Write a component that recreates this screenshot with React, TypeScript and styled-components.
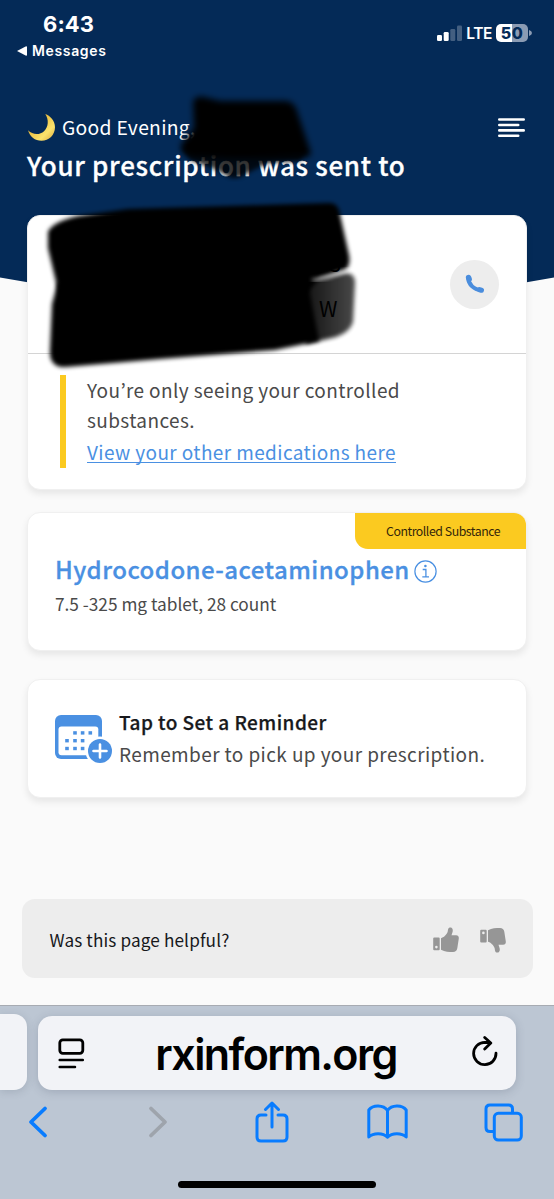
import React from "react";
import styled, { createGlobalStyle } from "styled-components";

const sans = `"Noto Sans CJK KR", "Noto Sans", sans-serif`;
const system = `Inter, "Liberation Sans", sans-serif`;

const GlobalStyle = createGlobalStyle`
  * { box-sizing: border-box; }
  body { margin: 0; background: #fafafa; }
`;

const Page = styled.div`
  position: relative;
  display: flex;
  flex-direction: column;
  width: 554px;
  height: 1199px;
  overflow: hidden;
  background: #fafafa;
  font-family: ${sans};
`;

const Hero = styled.header`
  height: 330px;
  flex: none;
  background: #042a57;
  color: #fff;
  clip-path: polygon(0 0, 100% 0, 100% 277.5px, 50% 325px, 0 277.5px);
`;

const StatusBar = styled.div`
  display: flex;
  justify-content: space-between;
  height: 112px;
  padding: 9px 22px 0 17px;
  font-family: ${system};
`;

const StatusLeft = styled.div`
  display: flex;
  flex-direction: column;
`;

const Time = styled.span`
  padding-left: 26px;
  font-size: 22px;
  font-weight: 700;
  line-height: 30px;
  letter-spacing: 0.1px;
`;

const BackLink = styled.span`
  display: flex;
  align-items: center;
  gap: 5px;
  margin-top: 2px;
  font-size: 14px;
  font-weight: 600;
  line-height: 20px;
  letter-spacing: 0.65px;
`;

const StatusRight = styled.div`
  display: flex;
  align-items: center;
  height: 16px;
  margin-top: 16px;
`;

const Network = styled.span`
  margin: 0 4px 0 4px;
  font-size: 15.5px;
  font-weight: 600;
  letter-spacing: -0.4px;
`;

const Battery = styled.span`
  display: flex;
  align-items: center;
  justify-content: center;
  width: 32px;
  height: 18px;
  border-radius: 5px;
  background: linear-gradient(90deg, #fff 50%, #8b9bb3 50%);
  color: #042a57;
  font-size: 16px;
  font-weight: 800;
  letter-spacing: 0.6px;
`;

const BatteryTip = styled.svg`
  margin-left: 1px;
`;

const Greeting = styled.div`
  display: flex;
  align-items: center;
  height: 30px;
  padding: 0 29px 0 27px;
  font-size: 19.3px;
  line-height: 30px;
  letter-spacing: 0.3px;
`;

const GreetingText = styled.span`
  flex: 1;
  padding-left: 7px;
`;

const MenuIcon = styled.svg`
  margin-top: 2px;
`;

const Heading = styled.h1`
  margin: 5px 0 0 27px;
  font-size: 26px;
  font-weight: 500;
  line-height: 36px;
  letter-spacing: 0.68px;
  white-space: nowrap;
  -webkit-text-stroke: 0.3px currentColor;
`;

const Main = styled.main`
  position: relative;
  flex: 1;
  margin-top: -115.5px;
  padding: 0 27px;
`;

const Card = styled.section<{ $height: number; $gap?: number }>`
  height: ${(p) => p.$height}px;
  margin-top: ${(p) => p.$gap ?? 0}px;
  border: 1px solid #f0f0f0;
  border-radius: 13px;
  background: #fff;
  overflow: hidden;
  box-shadow: 0 4px 7px rgba(0, 0, 0, 0.08);
`;

const Pharmacy = styled.div`
  display: flex;
  align-items: center;
  justify-content: flex-end;
  height: 138.5px;
  padding-right: 27px;
  border-bottom: 1px solid #d4d4d4;
`;

const CallButton = styled.button`
  display: flex;
  align-items: center;
  justify-content: center;
  width: 49px;
  height: 49px;
  padding: 0;
  border: 0;
  border-radius: 50%;
  background: #ededed;
`;

const Note = styled.div`
  height: 93px;
  margin: 21px 0 0 32px;
  padding-left: 21px;
  border-left: 6px solid #fbca20;
  color: #4a4a4a;
  font-size: 19px;
  line-height: 29.5px;
  letter-spacing: 0.4px;
`;

const NoteText = styled.p`
  width: 340px;
  margin: 0;
`;

const NoteLink = styled.a`
  display: block;
  margin-top: 3px;
  color: #4a90e2;
  text-decoration: underline;
  text-decoration-thickness: 1px;
  text-underline-offset: 2px;
  text-decoration-skip-ink: none;
`;

const Badge = styled.div`
  width: 171px;
  height: 35.5px;
  margin-left: auto;
  padding-left: 31px;
  border-bottom-left-radius: 13px;
  background: #fbca20;
  color: #33260a;
  font-size: 12.3px;
  line-height: 36px;
  letter-spacing: -0.45px;
  white-space: nowrap;
`;

const DrugRow = styled.div`
  display: flex;
  align-items: center;
  gap: 4px;
  height: 36px;
  margin: 2px 0 0 27px;
`;

const DrugName = styled.h2`
  margin: 0;
  color: #4a90e2;
  font-size: 24px;
  font-weight: 500;
  line-height: 36px;
  letter-spacing: 0.45px;
  white-space: nowrap;
  -webkit-text-stroke: 0.3px currentColor;
`;

const InfoIcon = styled.svg`
  margin-top: 5px;
`;

const Dosage = styled.p`
  margin: 3px 0 0 27px;
  color: #4a4a4a;
  font-size: 17.25px;
  line-height: 28px;
  white-space: nowrap;
`;

const Reminder = styled.div`
  display: flex;
  padding: 26px 0 0 27px;
`;

const CalendarIcon = styled.svg`
  margin-top: 8.5px;
`;

const ReminderCopy = styled.div`
  margin-left: 7px;
  font-size: 19px;
  line-height: 32px;
  white-space: nowrap;
`;

const ReminderTitle = styled.div`
  color: #17181b;
  font-weight: 500;
  letter-spacing: 0.45px;
  -webkit-text-stroke: 0.25px currentColor;
`;

const ReminderText = styled.div`
  color: #4a4a4a;
  letter-spacing: 0.4px;
`;

const Feedback = styled.div`
  display: flex;
  align-items: center;
  height: 79px;
  margin: 101px -5.5px 0;
  padding: 1px 26.5px 0 28px;
  border-radius: 13px;
  background: #ededed;
  color: #17181b;
  font-size: 17.2px;
  letter-spacing: 0.12px;
`;

const FeedbackLabel = styled.span`
  flex: 1;
`;

const ThumbIcon = styled.svg<{ $down?: boolean }>`
  margin: ${(p) => (p.$down ? "1px 0 0 21px" : "2px 0 0")};
  transform: ${(p) => (p.$down ? "scaleY(-1)" : "none")};
`;

const Browser = styled.footer`
  display: flex;
  flex-direction: column;
  height: 194px;
  flex: none;
  border-top: 1px solid #a7abb2;
  background: #bcc6d3;
`;

const AddressRow = styled.div`
  display: flex;
  gap: 11px;
  padding-top: 9px;
  height: 85px;
`;

const PreviousTab = styled.div`
  width: 27px;
  height: 76px;
  margin-top: -1px;
  border-radius: 0 13px 13px 0;
  background: #f2f3f7;
  box-shadow: 0 2px 8px rgba(60, 70, 90, 0.18);
`;

const AddressBar = styled.div`
  display: flex;
  align-items: center;
  justify-content: space-between;
  width: 478px;
  height: 74px;
  margin-top: 1px;
  padding: 0 18px 0 20px;
  border-radius: 14px;
  background: #f2f3f7;
  box-shadow: 0 2px 10px rgba(60, 70, 90, 0.22);
`;

const Address = styled.span`
  margin: 1px 5px 0 0;
  color: #000;
  font-family: ${system};
  font-size: 43px;
  font-weight: 600;
  letter-spacing: -1.6px;
  line-height: 74px;
`;

const ReloadIcon = styled.svg`
  margin-bottom: 4px;
`;

const Toolbar = styled.nav`
  display: flex;
  justify-content: space-between;
  align-items: center;
  height: 62px;
  padding: 0 29px 0 16px;
`;

const ToolButton = styled.span<{ $nudge?: number }>`
  display: flex;
  justify-content: center;
  width: 44px;
  padding-left: ${(p) => p.$nudge ?? 0}px;
`;

const HomeIndicator = styled.div`
  width: 198px;
  height: 7px;
  margin: 28px auto 0;
  border-radius: 4px;
  background: #000;
`;

const Marker = styled.svg`
  position: absolute;
  left: 0;
  top: 0;
  pointer-events: none;
`;

const Moon = () => (
  <svg width="28" height="28" viewBox="0 0 28 28">
    <defs>
      <linearGradient id="moon" x1="0" y1="0" x2="1" y2="1">
        <stop offset="0.3" stopColor="#e9b93a" />
        <stop offset="0.7" stopColor="#fbe36d" />
        <stop offset="1" stopColor="#d9a63c" />
      </linearGradient>
    </defs>
    <path d="M18.3 1 C23 2.8 28 7.4 28 14.2 C28 21.8 22 27.8 14.5 27.8 C8 27.8 3 23.8 1 17.3 C6 22.3 13 22 17 18.2 C21.5 13.9 22 6.8 18.3 1 Z" fill="url(#moon)" />
  </svg>
);

const Signal = () => (
  <svg width="25" height="16" viewBox="0 0 25 16" fill="#fff">
    <rect x="0" y="10" width="5" height="6" rx="1.3" />
    <rect x="6.7" y="7" width="5" height="9" rx="1.3" />
    <rect x="13.3" y="4" width="5" height="12" rx="1.3" opacity=".25" />
    <rect x="20" y="0.5" width="5" height="15.5" rx="1.3" opacity=".25" />
  </svg>
);

const Menu = () => (
  <MenuIcon width="27" height="20" viewBox="0 0 27 20" stroke="#fff" strokeWidth="2.6" strokeLinecap="round">
    <path d="M1.3 1.5H25.7M1.3 7H20.2M1.3 12.4H25.7M1.3 17.8H20.2" />
  </MenuIcon>
);

const Phone = () => (
  <svg width="20" height="20" viewBox="0 0 20 20" fill="none" stroke="#4a8ddd">
    <path d="M3 3.5 C3.5 10.5 9 16 16.5 16.2" strokeWidth="4" />
    <path d="M3.6 3.6 L4.2 5" strokeWidth="5.4" strokeLinecap="round" />
    <path d="M14.6 15.7 L16.4 16.2" strokeWidth="5.2" strokeLinecap="round" />
  </svg>
);

const Info = () => (
  <InfoIcon width="23" height="23" viewBox="0 0 23 23" fill="none" stroke="#4a90e2">
    <circle cx="11.5" cy="11.5" r="10.6" strokeWidth="1.2" />
    <path d="M8.7 9.5H11.9V16.6M8.3 16.8H15" strokeWidth="1.3" />
    <circle cx="11.4" cy="6" r="1.3" fill="#4a90e2" stroke="none" />
  </InfoIcon>
);

const dots = [
  [18.2, 16.2], [25.8, 16.2], [33.5, 16.2],
  [10.2, 24], [18.2, 24], [25.8, 24],
  [10.2, 31.8], [18.2, 31.8], [25.8, 31.8],
];

const Calendar = () => (
  <CalendarIcon width="57" height="50" viewBox="0 0 57 50">
    <rect width="47" height="44" rx="6" fill="#4a90e2" />
    <rect x="3.5" y="11.5" width="39.8" height="28.7" rx="3" fill="#fff" />
    {dots.map(([x, y]) => (
      <rect key={`${x}-${y}`} x={x} y={y} width="3.6" height="3.4" fill="#4a90e2" />
    ))}
    <circle cx="45" cy="36" r="14.5" fill="#fff" />
    <circle cx="45" cy="36" r="12" fill="#4a90e2" />
    <path d="M45 29.5V42.5M38.5 36H51.5" stroke="#fff" strokeWidth="2.6" strokeLinecap="round" />
  </CalendarIcon>
);

const Thumb = ({ down }: { down?: boolean }) => (
  <ThumbIcon $down={down} width="26" height="26" viewBox="0 0 26 26" fill="#969696">
    <path fillRule="evenodd" d="M1.2 10.6H5.7Q6.7 10.6 6.7 11.6V22.3Q6.7 23.3 5.7 23.3H1.2Q0.2 23.3 0.2 22.3V11.6Q0.2 10.6 1.2 10.6ZM3.4 18.8A1.3 1.3 0 1 0 3.4 21.4A1.3 1.3 0 1 0 3.4 18.8Z" />
    <path d="M8 11.2C10.5 10.6 13.9 7.7 14.7 4.5C15 2.7 15 0.4 17.3 0.4C19.7 0.4 20.3 3.1 19.4 5.5L18.5 8.3H23C25.3 8.3 26 9.7 25.8 11.5L24.3 21.3C23.8 23.8 22.4 25 20 25C15.9 25 12 25 8 22.8Z" />
  </ThumbIcon>
);

const PageMenu = () => (
  <svg width="27" height="31" viewBox="0 0 27 31" fill="none" stroke="#000" strokeWidth="2.8" strokeLinecap="round">
    <rect x="1.8" y="1.8" width="23" height="13.5" rx="3" />
    <path d="M1.7 22H24.8M1.7 29H17" strokeWidth="2.5" />
  </svg>
);

const Reload = () => (
  <ReloadIcon width="26" height="31" viewBox="0 0 26 31" fill="none" stroke="#000" strokeWidth="2.8" strokeLinecap="round" strokeLinejoin="round">
    <path d="M24 17.2A11.2 11.2 0 1 1 12.8 6.3L18.3 6.6M12.7 1.5L18.8 7L12.7 13" />
  </ReloadIcon>
);

const blue = "#087cff";

const Chevron = ({ forward }: { forward?: boolean }) => (
  <svg width="20" height="34" viewBox="0 0 20 34" fill="none" stroke={forward ? "#9ea4ac" : blue} strokeWidth="3.8" strokeLinecap="round" strokeLinejoin="round">
    <path d={forward ? "M3 3.5L17 17L3 30.5" : "M17 3.5L3 17L17 30.5"} />
  </svg>
);

const Share = () => (
  <svg width="34" height="42" viewBox="0 0 34 42" fill="none" stroke={blue} strokeWidth="3" strokeLinecap="round" strokeLinejoin="round">
    <path d="M11 14H6Q2 14 2 18V36Q2 40 6 40H28Q32 40 32 36V18Q32 14 28 14H23M17 26V3M10.5 8.5L17 2L23.5 8.5" />
  </svg>
);

const Book = () => (
  <svg width="41" height="36" viewBox="0 0 41 36" fill="none" stroke={blue} strokeWidth="3" strokeLinejoin="round">
    <path d="M20.5 6.5C16.5 0.8 6 0.5 1.8 6V33C6.5 28.6 16 28.7 20.5 33.2C25 28.7 34.5 28.6 39.2 33V6C35 0.5 24.5 0.8 20.5 6.5ZM20.5 6.5V33" />
  </svg>
);

const Tabs = () => (
  <svg width="39" height="39" viewBox="0 0 39 39" fill="none" stroke={blue} strokeWidth="3">
    <rect x="10.3" y="10.3" width="27" height="26.7" rx="4" />
    <path d="M10.3 28.5H6Q2 28.5 2 24.5V6Q2 2 6 2H24.5Q28.5 2 28.5 6V10.3" />
  </svg>
);

const Redactions = () => (
  <Marker width="554" height="400" viewBox="0 0 554 400">
    <defs>
      <filter id="edge" x="-10%" y="-10%" width="120%" height="120%">
        <feGaussianBlur stdDeviation="2" />
      </filter>
      <filter id="soft" x="-10%" y="-20%" width="120%" height="140%">
        <feGaussianBlur stdDeviation="3" />
      </filter>
      <linearGradient id="fade" x1="0" x2="1">
        <stop offset="0" stopColor="#000" />
        <stop offset="1" stopColor="#000" stopOpacity="0.75" />
      </linearGradient>
    </defs>
    <path d="M193 101Q197 95 204 97L220 101L286 101Q293 102 296 108L310 150Q312 157 306 157L262 158L230 158L190 156Q178 152 182 143L194 128Z" filter="url(#soft)" />
    <path d="M182 148L306 152L300 161L268 163L248 173Q236 181 229 177L214 169L190 160Z" opacity="0.78" filter="url(#edge)" />
    <path d="M48 232Q52 222 78 216L128 209L328 203Q336 202 339 210L349 255Q351 266 345 270L320 278L300 300L60 300L57 286L48 248Z" filter="url(#edge)" />
    <path d="M58 282L306 276L319 341L275 350L160 359L66 367Q49 368 50 350L52 304Z" filter="url(#edge)" />
    <path d="M300 281L346 273Q355 273 355 283L353 322Q350 332 336 337L306 344Z" fill="url(#fade)" opacity="0.95" filter="url(#edge)" />
    <path d="M312 280Q324 279 332 276L350 269" stroke="#fff" strokeWidth="2" opacity="0.75" fill="none" filter="url(#edge)" />
    <text x="329" y="272" fontSize="22" fontFamily="Noto Sans CJK KR" fill="#000">3</text>
    <text x="319" y="317" fontSize="21" fontFamily="Noto Sans CJK KR" fill="#000">W</text>
  </Marker>
);

export default function App() {
  return (
    <Page>
      <GlobalStyle />
      <Hero>
        <StatusBar>
          <StatusLeft>
            <Time>6:43</Time>
            <BackLink>
              <svg width="10" height="10" viewBox="0 0 10 10" fill="#fff"><path d="M0 5L8.6 .4Q10 0 10 1V9Q10 10 8.6 9.6Z" /></svg>
              Messages
            </BackLink>
          </StatusLeft>
          <StatusRight>
            <Signal />
            <Network>LTE</Network>
            <Battery>50</Battery>
            <BatteryTip width="3" height="6" viewBox="0 0 3 6" fill="#8b9bb3"><path d="M0 0Q3 1 3 3Q3 5 0 6Z" /></BatteryTip>
          </StatusRight>
        </StatusBar>
        <Greeting>
          <Moon />
          <GreetingText>Good Evening,</GreetingText>
          <Menu />
        </Greeting>
        <Heading>Your prescription was sent to</Heading>
      </Hero>
      <Main>
        <Card $height={275}>
          <Pharmacy>
            <CallButton aria-label="Call pharmacy"><Phone /></CallButton>
          </Pharmacy>
          <Note>
            <NoteText>You’re only seeing your controlled substances.</NoteText>
            <NoteLink>View your other medications here</NoteLink>
          </Note>
        </Card>
        <Card $height={139} $gap={22.8}>
          <Badge>Controlled Substance</Badge>
          <DrugRow>
            <DrugName>Hydrocodone-acetaminophen</DrugName>
            <Info />
          </DrugRow>
          <Dosage>7.5 -325 mg tablet, 28 count</Dosage>
        </Card>
        <Card $height={119} $gap={28}>
          <Reminder>
            <Calendar />
            <ReminderCopy>
              <ReminderTitle>Tap to Set a Reminder</ReminderTitle>
              <ReminderText>Remember to pick up your prescription.</ReminderText>
            </ReminderCopy>
          </Reminder>
        </Card>
        <Feedback>
          <FeedbackLabel>Was this page helpful?</FeedbackLabel>
          <Thumb />
          <Thumb down />
        </Feedback>
      </Main>
      <Browser>
        <AddressRow>
          <PreviousTab />
          <AddressBar>
            <PageMenu />
            <Address>rxinform.org</Address>
            <Reload />
          </AddressBar>
        </AddressRow>
        <Toolbar>
          <ToolButton><Chevron /></ToolButton>
          <ToolButton $nudge={8}><Chevron forward /></ToolButton>
          <ToolButton $nudge={3}><Share /></ToolButton>
          <ToolButton $nudge={2}><Book /></ToolButton>
          <ToolButton><Tabs /></ToolButton>
        </Toolbar>
        <HomeIndicator />
      </Browser>
      <Redactions />
    </Page>
  );
}
